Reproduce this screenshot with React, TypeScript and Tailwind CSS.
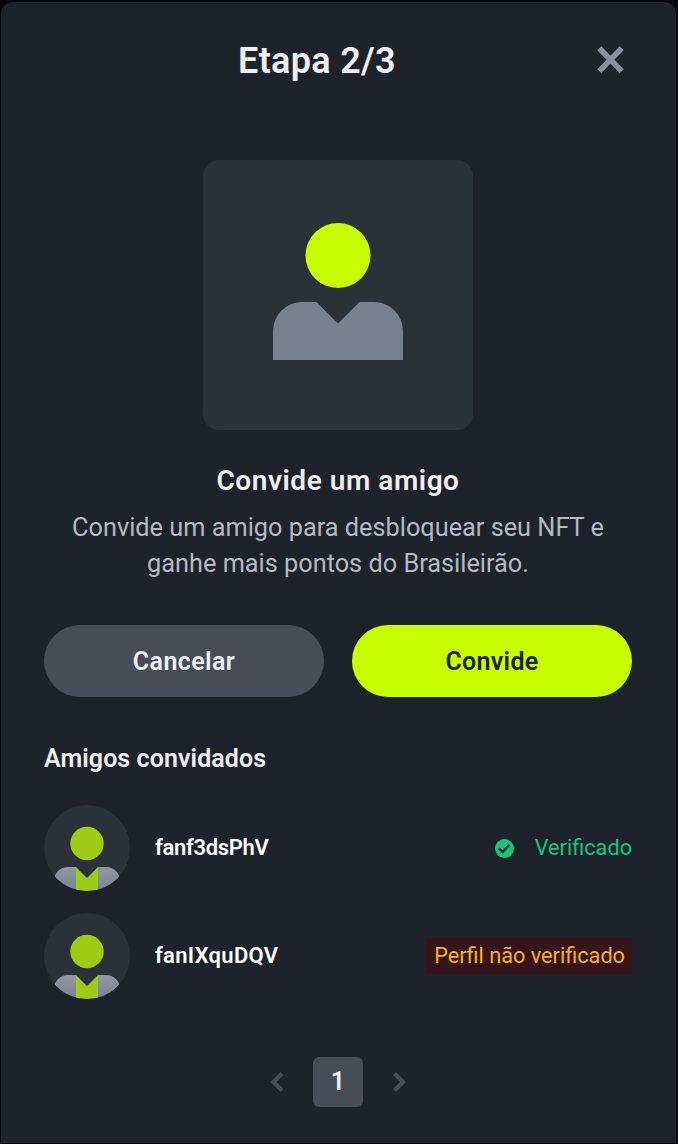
import { useState } from 'react'

type Friend = {
  name: string
  verified: boolean
  nameClass: string
}

const friends: Friend[] = [
  { name: 'fanf3dsPhV', verified: true, nameClass: 'tracking-[-0.320px]' },
  { name: 'fanIXquDQV', verified: false, nameClass: 'tracking-[0.300px]' },
]

function InviteIllustration() {
  return (
    <div className="w-[270px] h-[270px] rounded-2xl bg-[#2b3138] overflow-hidden">
      <svg viewBox="0 0 270 270" className="w-full h-full">
        <circle cx="135" cy="95.5" r="32.5" fill="#c8ff00" />
        <path d="M70 200V171a29 29 0 0 1 29-29h14.5L135 163.5 156.500 142H171a29 29 0 0 1 29 29v29z" fill="#78818f" />
      </svg>
    </div>
  )
}

function Avatar() {
  return (
    <svg viewBox="0 0 86 86" className="w-[86px] h-[86px] rounded-full shrink-0">
      <defs>
        <linearGradient id="shoulders" x1="0" y1="62" x2="0" y2="86" gradientUnits="userSpaceOnUse">
          <stop stopColor="#9297a3" />
          <stop offset="1" stopColor="#7d8290" />
        </linearGradient>
      </defs>
      <rect width="86" height="86" fill="#2b3138" />
      <circle cx="43" cy="38.500" r="16.700" fill="#9fcb14" />
      <path d="M10 86V76a14 14 0 0 1 14-14h8v24zM54 62h8a14 14 0 0 1 14 14v10H54z" fill="url(#shoulders)" />
      <path d="M32 62l11 11 11-11v24H32z" fill="#9fcb14" />
    </svg>
  )
}

function VerifiedIcon() {
  return (
    <svg viewBox="0 0 19 19" className="w-[19px] h-[19px]">
      <circle cx="9.5" cy="9.5" r="9.5" fill="#10c880" />
      <path d="M3.800 9.400l3.800 3.400 7-7.100" fill="none" stroke="#1e222a" strokeWidth="2.300" />
    </svg>
  )
}

function FriendRow({ friend }: { friend: Friend }) {
  return (
    <li className="flex items-center h-[86px]">
      <Avatar />
      <span className={`ml-[25px] pb-0.5 text-[22px] font-semibold text-white ${friend.nameClass}`}>{friend.name}</span>
      {friend.verified ? (
        <span className="ml-auto flex items-center gap-[21px] text-[21.700px] leading-9 text-[#10c880]">
          <VerifiedIcon />
          Verificado
        </span>
      ) : (
        <span className="ml-auto h-9 pl-2 pr-[7px] bg-[#37141c] text-[21.700px] leading-9 text-[#f3b70c]">
          Perfil não verificado
        </span>
      )}
    </li>
  )
}

export default function App() {
  const [open, setOpen] = useState(true)

  return (
    <div className="h-[1144px] bg-[#05070c] pt-0.5 pl-px pr-0.5 pb-px font-['Roboto','Noto_Sans',sans-serif]">
      {open && (
        <div className="h-full rounded-t-xl bg-[#1e222a] pl-[43px] pr-11 flex flex-col">
          <header className="flex items-center h-[116px]">
            <h1 className="flex-1 pt-0.5 text-center text-[36px] tracking-[0.3px] font-semibold text-[#eeeff3]">Etapa 2/3</h1>
            <button onClick={() => setOpen(false)} aria-label="Fechar" className="w-[42px] h-[42px] flex items-center justify-center">
              <svg viewBox="0 0 28 28" className="w-7 h-7">
                <path d="M2.300 2.300l22.400 22.800M24.700 2.300L2.300 25.100" stroke="#8b909c" strokeWidth="5.600" />
              </svg>
            </button>
          </header>

          <section className="mt-[42px] flex flex-col items-center text-center">
            <InviteIllustration />
            <h2 className="mt-8 text-[28px] leading-[38px] tracking-[0.550px] font-semibold text-[#eeeff3]">Convide um amigo</h2>
            <p className="mt-2.5 text-[25.300px] leading-9 text-[#b5b9c4]">
              Convide um amigo para desbloquear seu NFT e
              <br />
              ganhe mais pontos do Brasileirão.
            </p>
          </section>

          <div className="mt-[43px] grid grid-cols-2 gap-7">
            <button className="h-[72px] pt-0.5 rounded-full bg-[#474c56] text-[25px] tracking-[0.400px] font-semibold text-[#eeeff3]">Cancelar</button>
            <button className="h-[72px] pt-0.5 rounded-full bg-[#c8ff00] text-[25px] tracking-[0.300px] font-semibold text-[#1e222a]">Convide</button>
          </div>

          <h3 className="mt-11 text-[25px] leading-9 tracking-[0.080px] font-semibold text-[#eeeff3]">Amigos convidados</h3>
          <ul className="mt-7 flex flex-col gap-[22px]">
            {friends.map((friend) => (
              <FriendRow key={friend.name} friend={friend} />
            ))}
          </ul>

          <nav className="mt-[58px] flex items-center justify-center gap-[29px]">
            <button aria-label="Anterior">
              <svg viewBox="0 0 14 20" className="w-3.5 h-5">
                <path d="M12 1.500L3.500 10l8.500 8.500" fill="none" stroke="#474c56" strokeWidth="4.200" />
              </svg>
            </button>
            <button className="w-[50px] h-[50px] rounded-md bg-[#474c56] text-[25px] font-semibold text-[#eeeff3]">1</button>
            <button aria-label="Próxima">
              <svg viewBox="0 0 14 20" className="w-3.5 h-5">
                <path d="M2.500 1.500l8.500 8.500-8.500 8.500" fill="none" stroke="#474c56" strokeWidth="4.200" />
              </svg>
            </button>
          </nav>
        </div>
      )}
    </div>
  )
}
